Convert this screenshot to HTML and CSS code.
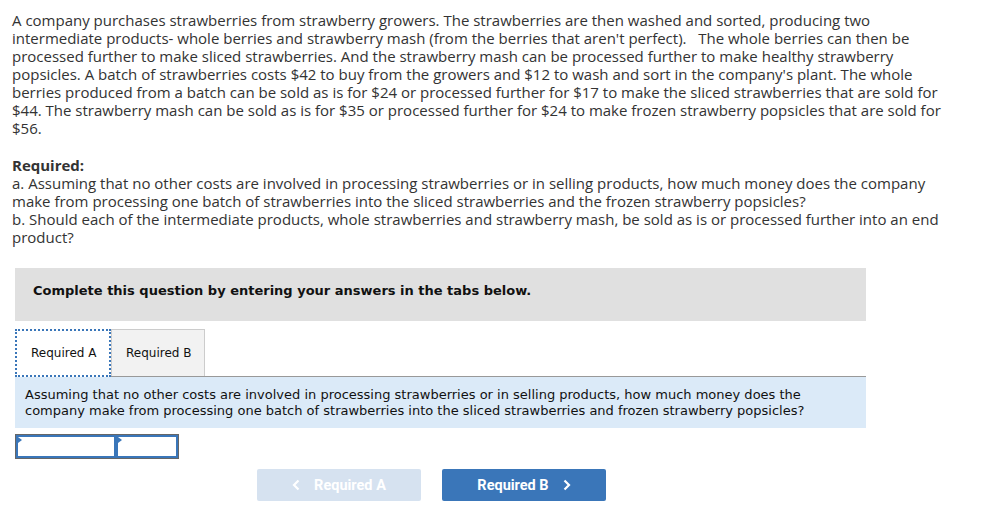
FILE: index.html
```html
<!DOCTYPE html>
<html>
<head>
<meta charset="utf-8">
<link rel="stylesheet" href="styles.css">
</head>
<body>
<div class="page">
  <p class="intro">A company purchases strawberries from strawberry growers. The strawberries are then washed and sorted, producing two intermediate products- whole berries and strawberry mash (from the berries that aren't perfect).&nbsp;&nbsp; The whole berries can then be processed further to make sliced strawberries. And the strawberry mash can be processed further to make healthy strawberry popsicles. A batch of strawberries costs $42 to buy from the growers and $12 to wash and sort in the company's plant. The whole berries produced from a batch can be sold as is for $24 or processed further for $17 to make the sliced strawberries that are sold for $44. The strawberry mash can be sold as is for $35 or processed further for $24 to make frozen strawberry popsicles that are sold for $56.</p>
  <div class="required">
    <div class="req-title">Required:</div>
    <div>a. Assuming that no other costs are involved in processing strawberries or in selling products, how much money does the company make from processing one batch of strawberries into the sliced strawberries and the frozen strawberry popsicles?</div>
    <div>b. Should each of the intermediate products, whole strawberries and strawberry mash, be sold as is or processed further into an end product?</div>
  </div>
  <div class="question">
    <div class="instructions">Complete this question by entering your answers in the tabs below.</div>
    <div class="tabs">
      <div class="tab active">Required A</div>
      <div class="tab">Required B</div>
    </div>
    <div class="panel">Assuming that no other costs are involved in processing strawberries or in selling products, how much money does the company make from processing one batch of strawberries into the sliced strawberries and frozen strawberry popsicles?</div>
    <div class="answer">
      <div class="cell wide"></div>
      <div class="cell narrow"></div>
    </div>
    <div class="nav">
      <button class="btn disabled"><svg class="chev" width="8" height="12" viewBox="0 0 8 12"><path d="M6.5 1.5 L2 6 L6.5 10.5" fill="none" stroke="#fff" stroke-width="2.2"/></svg> Required A</button>
      <button class="btn primary">Required B <svg class="chev" width="8" height="12" viewBox="0 0 8 12"><path d="M1.5 1.5 L6 6 L1.5 10.5" fill="none" stroke="#fff" stroke-width="2.2"/></svg></button>
    </div>
  </div>
</div>
</body>
</html>
```
FILE: styles.css
```css
html, body { margin: 0; padding: 0; background: #fff; }
.page {
  padding: 11px 12px 0 12px;
  font-family: "Open Sans", "Liberation Sans", sans-serif;
  color: #333;
}
.intro {
  margin: 0;
  width: 945px;
  font-size: 15px;
  line-height: 18px;
}
.required {
  margin-top: 19px;
  width: 935px;
  font-size: 15px;
  line-height: 18px;
}
.req-title { font-weight: bold; }
.question {
  margin-top: 22px;
  margin-left: 3px;
  width: 851px;
  font-family: "DejaVu Sans", Verdana, sans-serif;
  color: #111;
}
.instructions {
  background: #e0e0e0;
  height: 53px;
  box-sizing: border-box;
  padding: 15px 18px;
  font-weight: bold;
  font-size: 13px;
  line-height: 16px;
}
.tabs {
  display: flex;
  margin-top: 8px;
  border-bottom: 1px solid #999;
  height: 47px;
}
.tab {
  box-sizing: border-box;
  height: 47px;
  display: flex;
  align-items: center;
  white-space: nowrap;
  font-size: 12px;
  padding: 0 13px 0 14px;
  background: #f2f2f2;
  border: 1px solid #ccc;
  border-bottom: none;
}
.tab.active {
  background: #fff;
  border: 2px dotted #3a76b9;
  width: 96px;
  padding-left: 14px;
  height: 48px;
}
.panel {
  background: #dbeaf8;
  font-size: 13px;
  line-height: 16px;
  padding: 10px 10px 11px 10px;
  height: 51px;
  box-sizing: border-box;
}
.answer {
  display: flex;
  margin-top: 6px;
  width: 164px;
  height: 25px;
  border: 1px solid #666;
  box-sizing: border-box;
  background: #fff;
}
.cell {
  position: relative;
  box-sizing: border-box;
  border: 2px solid #3a76b9;
  height: 23px;
}
.cell::before {
  content: "";
  position: absolute;
  left: 0; top: 0;
  border-left: 4px solid #3a76b9;
  border-top: 3px solid transparent;
  border-bottom: 3px solid transparent;
}
.cell.wide { width: 100px; }
.cell.narrow { width: 62px; }
.nav {
  display: flex;
  gap: 21px;
  margin-top: 10px;
  margin-left: 242px;
}
.btn {
  width: 164px;
  height: 32px;
  border: none;
  border-radius: 2px;
  font-family: "Roboto", "Liberation Sans", sans-serif;
  font-weight: bold;
  font-size: 14.5px;
  color: #fff;
  display: flex;
  align-items: center;
  justify-content: center;
  gap: 14px;
  padding: 0;
}
.btn.disabled { background: #d6e2f0; }
.btn.primary { background: #3a76b9; }
```
